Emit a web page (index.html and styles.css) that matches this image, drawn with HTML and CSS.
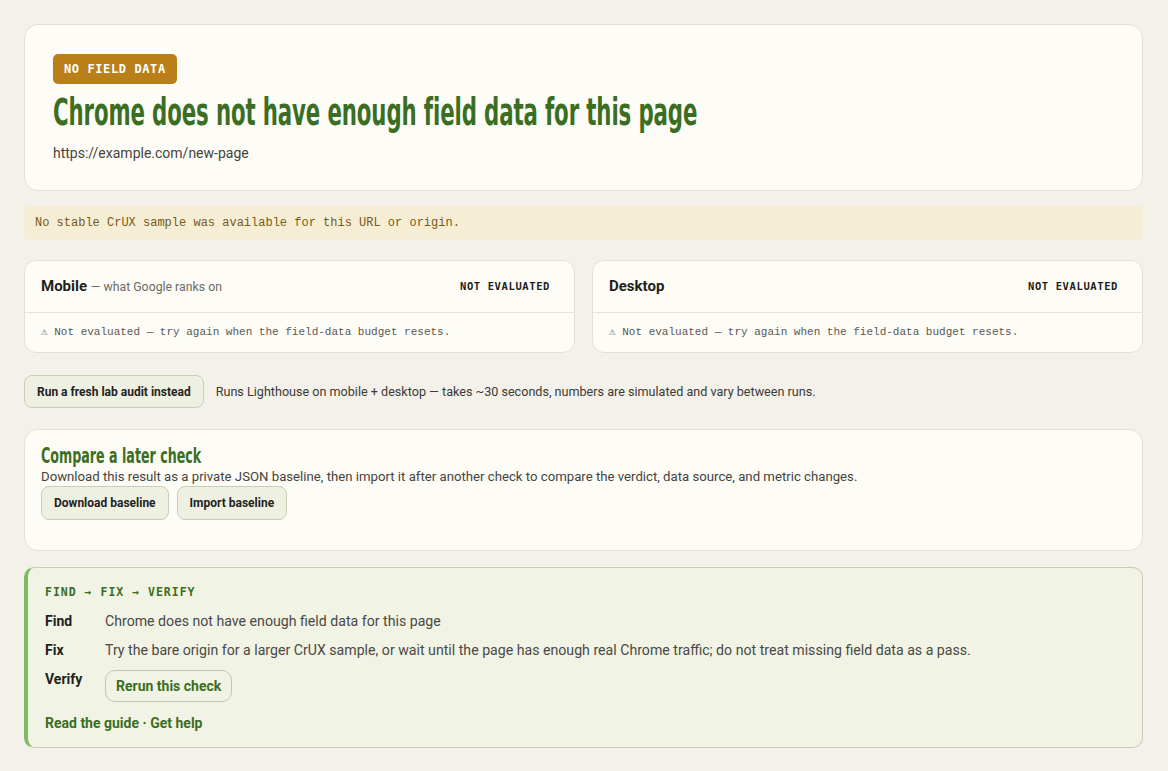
FILE: index.html
```html
<!DOCTYPE html>
<html>
<head>
	<meta charset="utf-8">
	<title>Field data check</title>
	<link rel="stylesheet" href="styles.css">
</head>
<body>
	<main class="page">
		<section class="card hero">
			<span class="badge">NO FIELD DATA</span>
			<h1 class="verdict"><span>Chrome does not have enough field data for this page</span></h1>
			<p class="url">https://example.com/new-page</p>
		</section>

		<p class="note">No stable CrUX sample was available for this URL or origin.</p>

		<div class="devices">
			<section class="card device">
				<div class="device-head">
					<h3><strong>Mobile</strong> <span>— what Google ranks on</span></h3>
					<span class="status">NOT EVALUATED</span>
				</div>
				<p class="device-body">⚠ Not evaluated — try again when the field-data budget resets.</p>
			</section>
			<section class="card device">
				<div class="device-head">
					<h3><strong>Desktop</strong></h3>
					<span class="status">NOT EVALUATED</span>
				</div>
				<p class="device-body">⚠ Not evaluated — try again when the field-data budget resets.</p>
			</section>
		</div>

		<div class="lab">
			<button class="btn">Run a fresh lab audit instead</button>
			<span>Runs Lighthouse on mobile + desktop — takes ~30 seconds, numbers are simulated and vary between runs.</span>
		</div>

		<section class="card compare">
			<h2><span>Compare a later check</span></h2>
			<p>Download this result as a private JSON baseline, then import it after another check to compare the verdict, data source, and metric changes.</p>
			<div class="actions">
				<button class="btn">Download baseline</button>
				<button class="btn">Import baseline</button>
			</div>
		</section>

		<section class="steps">
			<div class="steps-label">FIND → FIX → VERIFY</div>
			<dl>
				<dt>Find</dt>
				<dd>Chrome does not have enough field data for this page</dd>
				<dt>Fix</dt>
				<dd>Try the bare origin for a larger CrUX sample, or wait until the page has enough real Chrome traffic; do not treat missing field data as a pass.</dd>
				<dt>Verify</dt>
				<dd><button class="btn rerun">Rerun this check</button></dd>
			</dl>
			<p class="links"><a href="#">Read the guide</a> · <a href="#">Get help</a></p>
		</section>
	</main>
</body>
</html>
```

FILE: styles.css
```css
body{
	margin: 0;
	background-color: #f3f1ea;
	color: #2b2b26;
	font-family: Roboto, "Liberation Sans", sans-serif;
	font-size: 13px;
}
.page{
	padding: 24px 25px 24px 24px;
	display: flex;
	flex-direction: column;
}
.card{
	background-color: #fdfcf7;
	border: 1px solid #e3e0d6;
	border-radius: 14px;
}
.hero{
	padding: 29px 28px 28px;
}
.badge{
	display: inline-block;
	background-color: #b97f19;
	color: #fff;
	font-family: "DejaVu Sans Mono", "Liberation Mono", monospace;
	font-weight: bold;
	font-size: 12px;
	letter-spacing: 0.6px;
	line-height: 30px;
	padding: 0 11px;
	border-radius: 5px;
}
/* headline face is a squeezed condensed bold */
.verdict,
.compare h2{
	color: #3b6e23;
	font-family: "DejaVu Sans Condensed", "Liberation Sans", sans-serif;
	font-weight: bold;
	white-space: nowrap;
}
.verdict span,
.compare h2 span{
	display: inline-block;
	transform: scaleX(0.64);
	transform-origin: left center;
}
.verdict{
	margin: 9px 0 11px;
	font-size: 37px;
	line-height: 40px;
	letter-spacing: -0.2px;
}
.url{
	margin: 0;
	color: #45443e;
	font-size: 14px;
	line-height: 18px;
}
.note{
	margin: 15px 0 20px;
	padding: 0 11px;
	line-height: 34px;
	background-color: #f5eed5;
	border-radius: 5px;
	color: #77591c;
	font-family: "Liberation Mono", "DejaVu Sans Mono", monospace;
	font-size: 12px;
}
.devices{
	display: grid;
	grid-template-columns: 1fr 1fr;
	gap: 17px;
}
.device{
	border-radius: 12px;
}
.device-head{
	display: flex;
	justify-content: space-between;
	align-items: center;
	height: 50px;
	padding: 0 24px 1px 16px;
	border-bottom: 1px solid #e6e3d9;
}
.device-head h3{
	margin: 0;
	font-size: 15px;
	font-weight: normal;
}
.device-head h3 strong{
	color: #1f1f1b;
}
.device-head h3 span{
	color: #6c6b63;
	font-size: 12.3px;
}
.status{
	font-family: "DejaVu Sans Mono", "Liberation Mono", monospace;
	font-weight: bold;
	font-size: 10.5px;
	letter-spacing: 0.6px;
	color: #1f1f1b;
}
.device-body{
	margin: 0;
	padding: 0 16px;
	line-height: 39px;
	color: #5a5953;
	font-family: "Liberation Mono", "DejaVu Sans Mono", monospace;
	font-size: 11px;
}
.btn{
	background-color: #eef0e1;
	border: 1px solid #c9cdb7;
	border-radius: 8px;
	color: #23231f;
	font-family: Roboto, "Liberation Sans", sans-serif;
	font-weight: bold;
	font-size: 12px;
	padding: 0 12px;
	height: 33px;
	cursor: pointer;
}
.lab{
	display: flex;
	align-items: center;
	gap: 12px;
	margin: 22px 0 21px;
	color: #3b3a35;
	font-size: 12.6px;
}
.compare{
	padding: 15px 16px 30px;
}
.compare h2{
	margin: 0;
	font-size: 22px;
	line-height: 22px;
}
.compare p{
	margin: 1px 0 0;
	color: #45443e;
	line-height: 18px;
	font-size: 13.2px;
}
.actions{
	display: flex;
	gap: 8px;
}
.actions .btn{
	height: 34px;
	padding: 0 12px;
}
.steps{
	margin-top: 16px;
	padding: 17px 16px 15px 17px;
	background-color: #f1f3e4;
	border: 1px solid #c9ccb5;
	border-left: 4px solid #7fbb62;
	border-radius: 10px;
	font-size: 14px;
}
.steps-label{
	color: #3b6e23;
	font-family: "DejaVu Sans Mono", "Liberation Mono", monospace;
	font-weight: bold;
	font-size: 11.5px;
	letter-spacing: 1px;
	line-height: 14px;
}
.steps dl{
	display: grid;
	grid-template-columns: 60px 1fr;
	row-gap: 11px;
	margin: 13px 0 0;
	line-height: 18px;
}
.steps dt{
	font-weight: bold;
	color: #1f1f1b;
}
.steps dd{
	margin: 0;
	color: #4a4944;
	font-size: 14.15px;
}
.rerun{
	height: 32px;
	background-color: transparent;
	border-color: #c3c7b0;
	border-radius: 10px;
	color: #3b6e23;
	font-size: 14px;
	padding: 0 10px;
}
.links{
	margin: 12px 0 0;
	color: #3b6e23;
	font-weight: bold;
	line-height: 18px;
}
.links a{
	color: #3b6e23;
	text-decoration: none;
}
```
